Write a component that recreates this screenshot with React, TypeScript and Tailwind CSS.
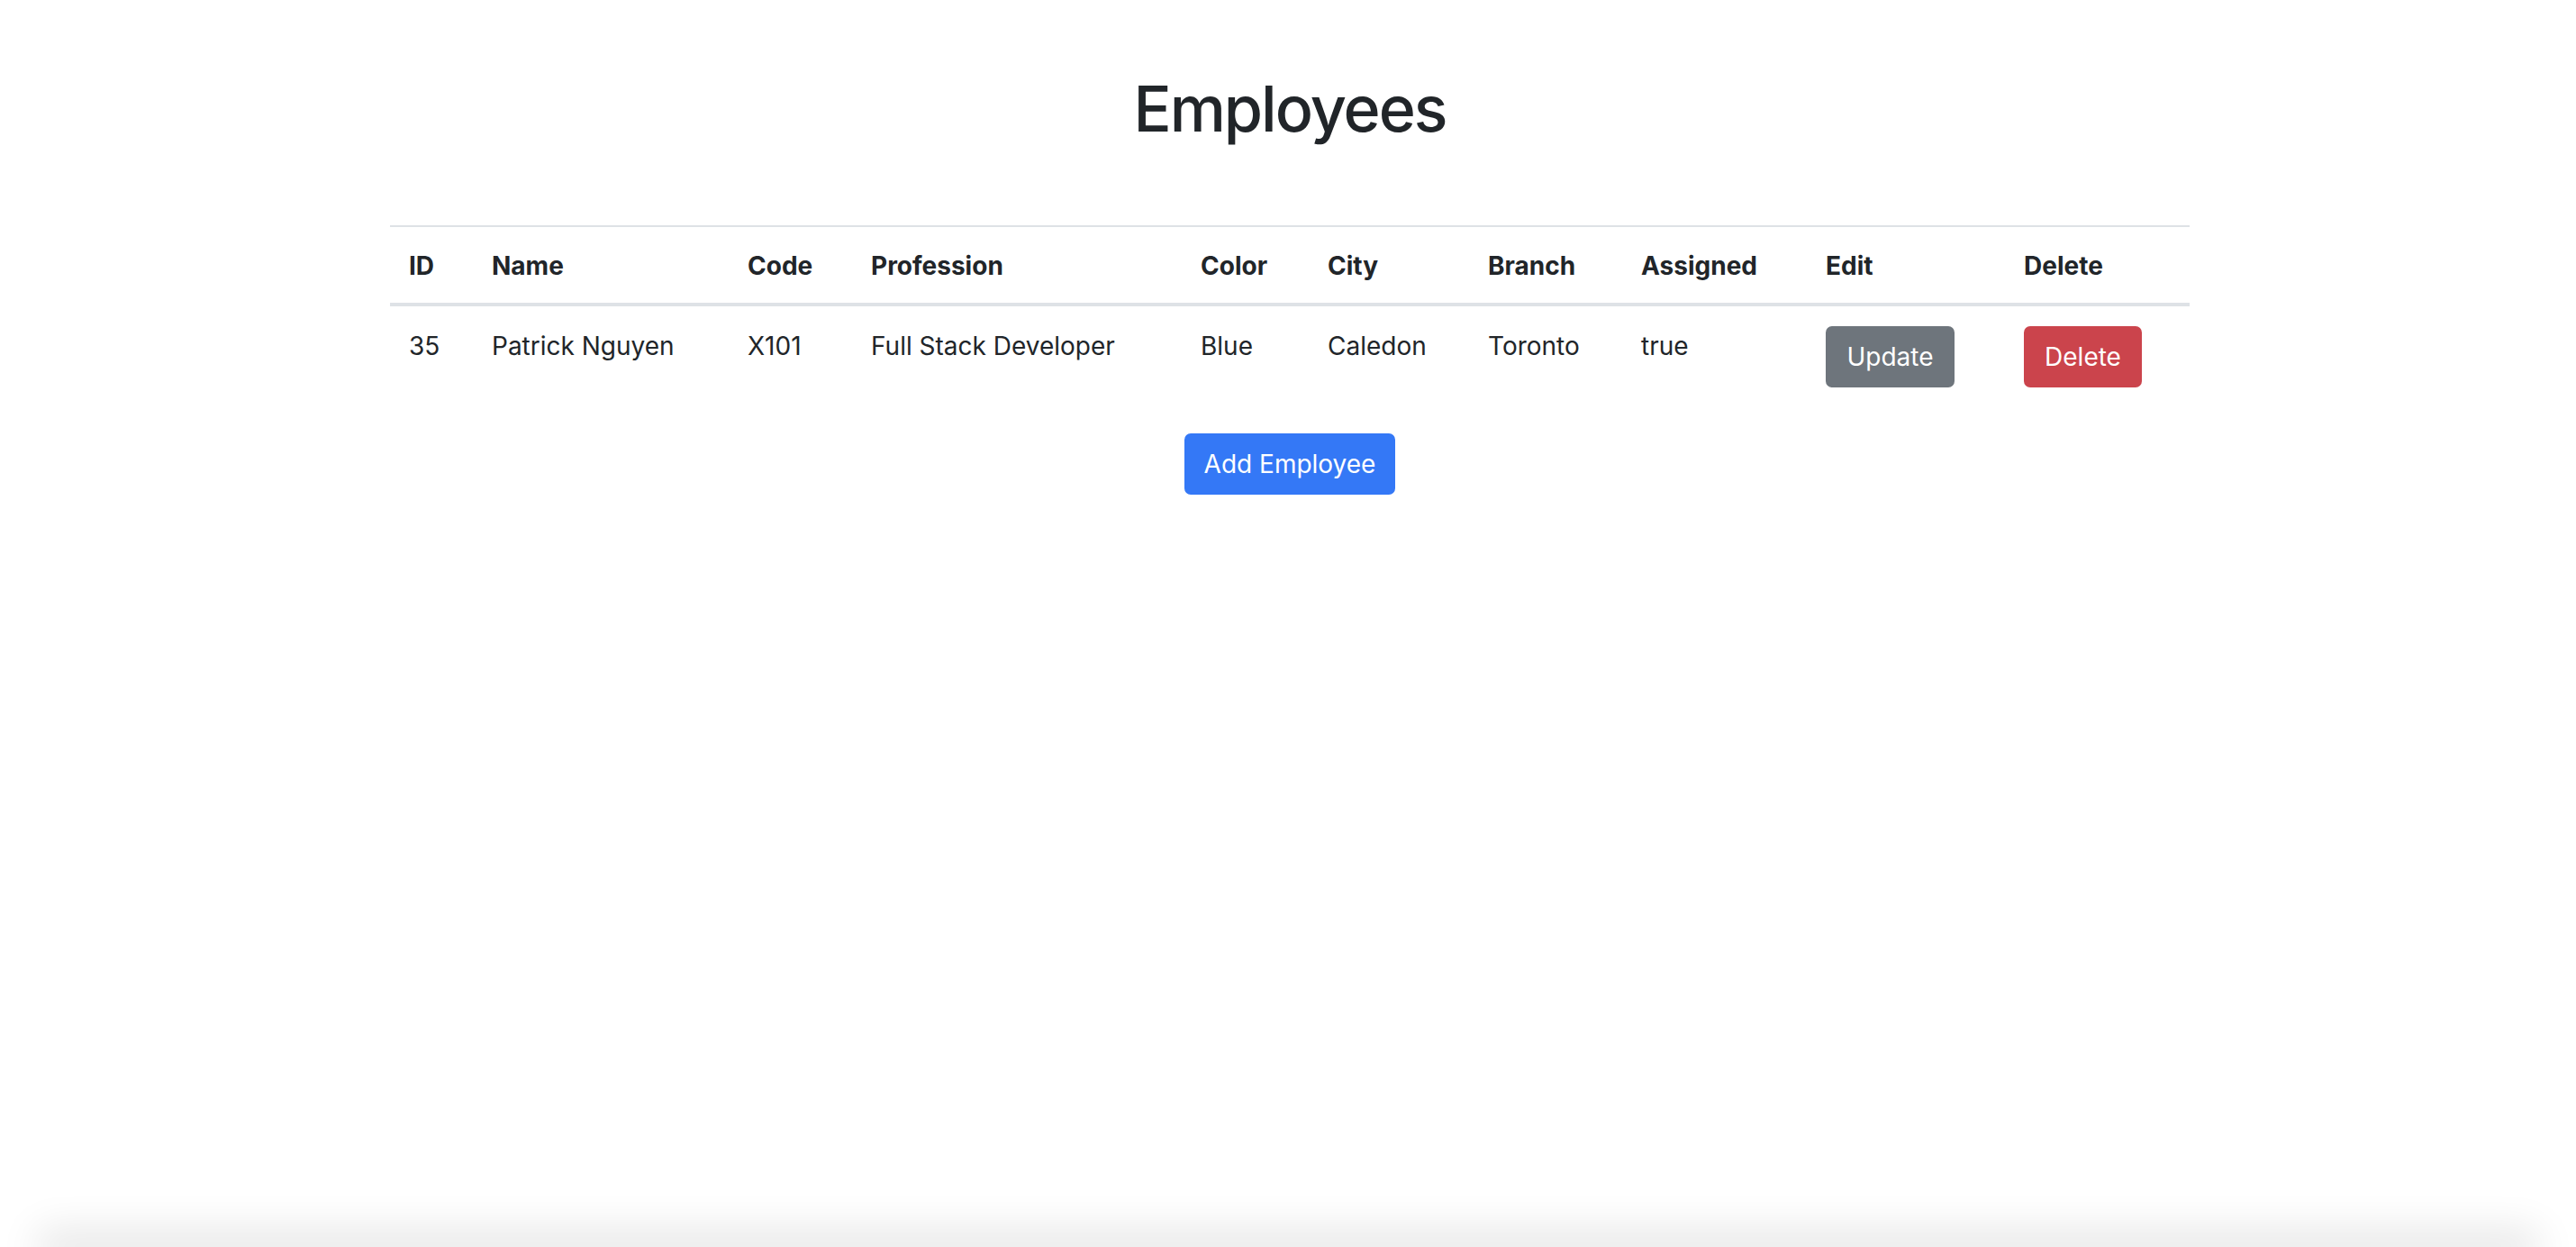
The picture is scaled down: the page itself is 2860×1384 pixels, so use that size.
import React from "react";

const cols = [
  { key: "id", label: "ID", w: "w-[92px]" },
  { key: "name", label: "Name", w: "w-[284px]" },
  { key: "code", label: "Code", w: "w-[137px]" },
  { key: "profession", label: "Profession", w: "w-[366px]" },
  { key: "color", label: "Color", w: "w-[141px]" },
  { key: "city", label: "City", w: "w-[178px]" },
  { key: "branch", label: "Branch", w: "w-[170px]" },
  { key: "assigned", label: "Assigned", w: "w-[205px]" },
  { key: "edit", label: "Edit", w: "w-[220px]" },
  { key: "delete", label: "Delete", w: "w-[205px]" },
];

const rows = [
  {
    id: "35",
    name: "Patrick Nguyen",
    code: "X101",
    profession: "Full Stack Developer",
    color: "Blue",
    city: "Caledon",
    branch: "Toronto",
    assigned: "true",
  },
];

const tdText = "align-top px-[21px] pt-[23px] pb-[19px]";

export default function App() {
  return (
    <div className="h-[1384px] w-full overflow-hidden bg-white flex flex-col font-[Inter,'Liberation_Sans',sans-serif] text-[#212529]">
      <h1 className="pt-[79px] pl-[4px] text-center text-[70px] leading-[84px] font-medium tracking-[-2px]">
        Employees
      </h1>
      <div className="mt-[87px] pl-[4px] flex justify-center">
        <table className="w-[1998px] table-fixed border-collapse text-[28px] leading-[42px]">
          <colgroup>
            {cols.map((c) => (
              <col key={c.key} className={c.w} />
            ))}
          </colgroup>
          <thead>
            <tr>
              {cols.map((c) => (
                <th
                  key={c.key}
                  className="text-left font-bold px-[21px] pt-[22px] pb-[20px] border-t-2 border-b-4 border-[#dee2e6]"
                >
                  {c.label}
                </th>
              ))}
            </tr>
          </thead>
          <tbody>
            {rows.map((r) => (
              <tr key={r.id}>
                <td className={tdText}>{r.id}</td>
                <td className={tdText}>{r.name}</td>
                <td className={tdText}>{r.code}</td>
                <td className={tdText}>{r.profession}</td>
                <td className={tdText}>{r.color}</td>
                <td className={tdText}>{r.city}</td>
                <td className={tdText}>{r.branch}</td>
                <td className={tdText}>{r.assigned}</td>
                <td className="align-top px-[21px] pt-[22px] pb-[20px]">
                  <button className="h-[68px] w-[143px] rounded-[7px] bg-[#6e757c] text-white text-[28px] leading-[42px] flex items-center justify-center">
                    Update
                  </button>
                </td>
                <td className="align-top px-[21px] pt-[22px] pb-[20px]">
                  <button className="h-[68px] w-[131px] rounded-[7px] bg-[#cb444c] text-white text-[28px] leading-[42px] flex items-center justify-center">
                    Delete
                  </button>
                </td>
              </tr>
            ))}
          </tbody>
        </table>
      </div>
      <div className="mt-[31px] pl-[4px] flex justify-center">
        <button className="h-[68px] w-[234px] rounded-[7px] bg-[#3478f6] text-white text-[28px] leading-[42px] flex items-center justify-center">
          Add Employee
        </button>
      </div>
      <div className="mt-auto mx-[60px] h-0 shadow-[0_0_45px_18px_rgba(0,0,0,0.11)]" />
    </div>
  );
}
